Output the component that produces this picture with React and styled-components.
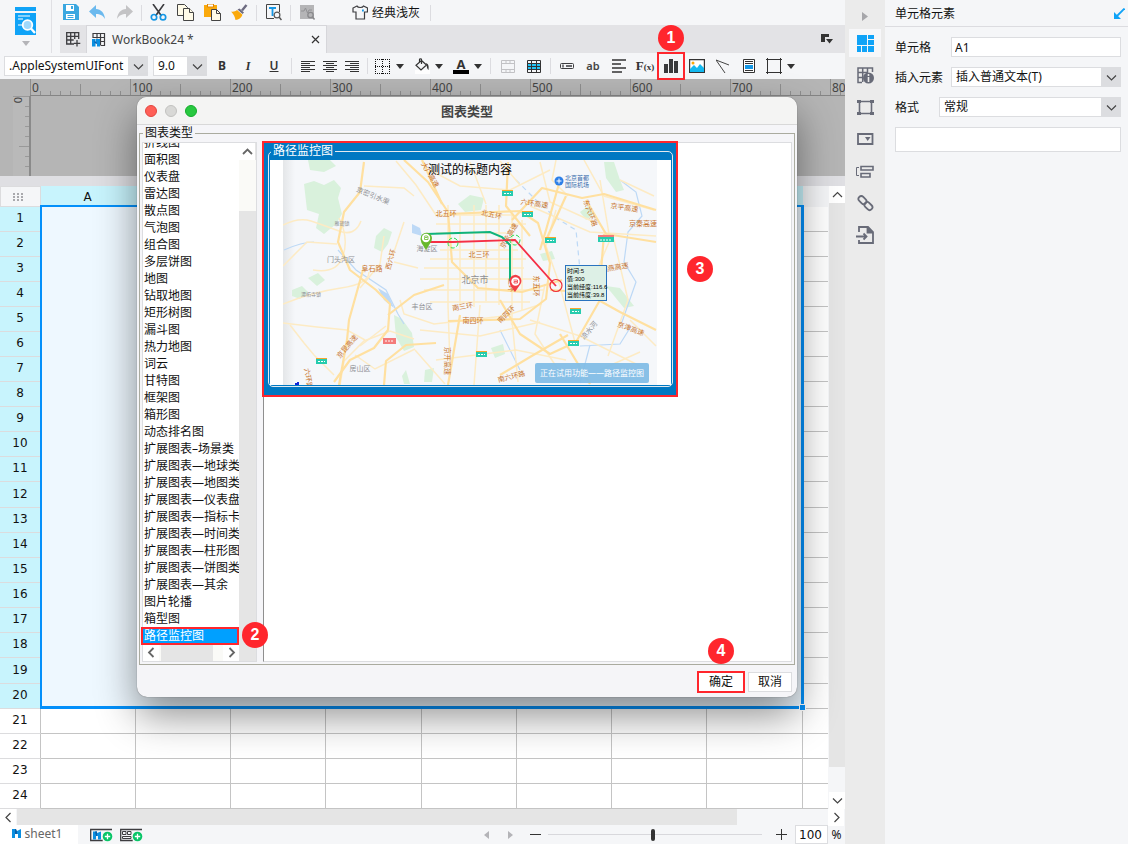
import React, { useState } from "react";
import styled, { createGlobalStyle, css } from "styled-components";

const chartTypes = [
  "折线图",
  "面积图",
  "仪表盘",
  "雷达图",
  "散点图",
  "气泡图",
  "组合图",
  "多层饼图",
  "地图",
  "钻取地图",
  "矩形树图",
  "漏斗图",
  "热力地图",
  "词云",
  "甘特图",
  "框架图",
  "箱形图",
  "动态排名图",
  "扩展图表–场景类",
  "扩展图表—地球类",
  "扩展图表—地图类",
  "扩展图表—仪表盘",
  "扩展图表—指标卡",
  "扩展图表—时间类",
  "扩展图表—柱形图",
  "扩展图表—饼图类",
  "扩展图表—其余",
  "图片轮播",
  "箱型图",
  "路径监控图",
];

const columns = [
  { name: "A", width: 95 },
  { name: "B", width: 95 },
  { name: "C", width: 95 },
  { name: "D", width: 96 },
  { name: "E", width: 95 },
  { name: "F", width: 95 },
  { name: "G", width: 95 },
  { name: "H", width: 96 },
];
const rows = Array.from({ length: 24 }, (_, i) => i + 1);
const tallRows = [12, 19];

export default function App() {
  const [selected, setSelected] = useState("路径监控图");
  const [zoom, setZoom] = useState(49);

  return (
    <Page>
      <GlobalStyle />
      <Designer>
        <Header>
          <Logo aria-label="预览">
            <LogoIcon />
            <Caret />
          </Logo>
          <HeaderRows>
            <QuickBar />
            <Tabs>
              <NewTab aria-label="新建">
                <svg width="16" height="16" viewBox="0 0 16 16" fill="none" stroke="#3d3d40" strokeWidth="1.3">
                  <path d="M9 13H1.7V1.7h12V8M1.7 5.3h12M1.7 9h7M5.7 1.7V13M9.7 1.7V8M12 9v6.5M8.8 12.3h6.5" />
                </svg>
              </NewTab>
              <WorkTab>
                <svg width="15" height="15" viewBox="0 0 15 15" fill="none">
                  <path d="M2 6V1.500h11.500v12H10M2 5.500h11.500M9.500 9.500h4M6 1.500v5M9.500 1.500v12" stroke="#3d3d40" strokeWidth="1.200" />
                  <path d="M1 7h3.500v7.500H1zM5 7h4v7.500H6V11H5z" fill="#0b8fe0" />
                  <path d="M3.500 8.500L6 11v1l-2.500-1z" fill="#0b5fae" />
                </svg>
                <TabName>WorkBook24 *</TabName>
                <TabClose aria-label="关闭">
                  <svg width="9" height="9" viewBox="0 0 9 9" stroke="#333" strokeWidth="1.2">
                    <path d="M1 1l7 7M8 1L1 8" />
                  </svg>
                </TabClose>
              </WorkTab>
              <TabList aria-label="标签列表">
                <svg width="13" height="11" viewBox="0 0 13 11" fill="#333">
                  <path d="M0 0h8v3H4v5H0zM5 5h7L8.500 9.500z" />
                </svg>
              </TabList>
            </Tabs>
          </HeaderRows>
        </Header>
        <FormatBar />
        <Canvas>
          <TopRuler />
          <CanvasBody>
            <SideRuler />
          </CanvasBody>
        </Canvas>
        <SheetGrid />
        <HScroll>
          <ScrollButton aria-label="左"><Arrow dir="left" /></ScrollButton>
          <HThumb />
          <ScrollButton aria-label="右"><Arrow dir="right" /></ScrollButton>
        </HScroll>
        <StatusBar>
          <SheetTab>
            <SheetMark />
            sheet1
          </SheetTab>
          <AddSheets>
            <BareButton aria-label="新增普通报表">
              <svg width="23" height="14" viewBox="0 0 23 14" fill="none">
                <path d="M22 1.500H.7v11h12" stroke="#3d3d40" strokeWidth="1.300" />
                <path d="M3 3.500h4v4H6v4H3zM7 5l4-1.500v8H8V8H7z" fill="#0b8fe0" />
                <path d="M5 3.500h2v4.500H6z" fill="#0a5ea8" />
                <circle cx="17.500" cy="8.500" r="4.800" fill="#08c567" />
                <path d="M17.500 5.800v5.400M14.800 8.500h5.400" stroke="#fff" strokeWidth="1.300" />
              </svg>
            </BareButton>
            <BareButton aria-label="新增聚合报表">
              <svg width="23" height="14" viewBox="0 0 23 14" fill="none">
                <path d="M22 1.500H.7v11h12" stroke="#3d3d40" strokeWidth="1.300" />
                <path d="M2.500 3.500h3.500v3H2.500zM7.500 3.500h3.500v3H7.500zM2.500 8.500h8.500v2H2.500z" stroke="#3d3d40" />
                <circle cx="17.500" cy="8.500" r="4.800" fill="#08c567" />
                <path d="M17.500 5.800v5.400M14.800 8.500h5.400" stroke="#fff" strokeWidth="1.300" />
              </svg>
            </BareButton>
          </AddSheets>
          <Pager>
            <BareButton aria-label="上一个">
              <svg width="5" height="8" viewBox="0 0 5 8"><path d="M5 0v8L0 4z" fill="#b4b4b8" /></svg>
            </BareButton>
            <BareButton aria-label="下一个">
              <svg width="5" height="8" viewBox="0 0 5 8"><path d="M0 0v8l5-4z" fill="#b4b4b8" /></svg>
            </BareButton>
          </Pager>
          <BareButton aria-label="缩小">
            <svg width="11" height="11" viewBox="0 0 11 11" stroke="#333"><path d="M0 5.500h11" /></svg>
          </BareButton>
          <Slider
            type="range"
            aria-label="缩放"
            value={zoom}
            onChange={(e) => setZoom(Number(e.target.value))}
          />
          <BareButton aria-label="放大">
            <svg width="11" height="11" viewBox="0 0 11 11" stroke="#333"><path d="M0 5.500h11M5.500 0v11" /></svg>
          </BareButton>
          <ZoomLabel>
            <ZoomInput type="text" defaultValue="100" />
            <Percent>%</Percent>
          </ZoomLabel>
        </StatusBar>
      </Designer>
      <SideTools />
      <CellPanel />
      <Dialog role="dialog" aria-label="图表类型">
        <DialogTitle>
          <Lights>
            <Light $color="#ff5f57" $edge="#e2463f" aria-label="关闭" />
            <Light $color="#d8d8d6" $edge="#c2c2c0" aria-label="最小化" />
            <Light $color="#28c840" $edge="#14ac2c" aria-label="最大化" />
          </Lights>
          图表类型
        </DialogTitle>
        <TypeFields>
          <legend>图表类型</legend>
          <ListPanel>
            <TypeList role="listbox" aria-label="图表类型">
              {chartTypes.map((type) => (
                <TypeItem
                  key={type}
                  role="option"
                  aria-selected={type === selected}
                  $active={type === selected}
                  onClick={() => setSelected(type)}
                >
                  {type}
                </TypeItem>
              ))}
            </TypeList>
            <ListVScroll>
              <ScrollButton aria-label="上"><Arrow dir="up" bold /></ScrollButton>
              <ListTrack />
              <ListThumb />
            </ListVScroll>
            <ListHScroll>
              <ScrollButton aria-label="左"><Arrow dir="left" bold /></ScrollButton>
              <ListHThumb />
              <ScrollButton aria-label="右"><Arrow dir="right" bold /></ScrollButton>
            </ListHScroll>
            <ListMark />
            <Badge $x={99} $y={479}>2</Badge>
          </ListPanel>
          <ChartPane>
            <ChartCard>
              <CardFields>
                <legend>路径监控图</legend>
                <RouteMap />
              </CardFields>
            </ChartCard>
            <Badge $x={423} $y={113}>3</Badge>
          </ChartPane>
        </TypeFields>
        <DialogFooter>
          <OkButton>确定</OkButton>
          <DialogButton>取消</DialogButton>
          <Badge $x={571} $y={-27}>4</Badge>
        </DialogFooter>
      </Dialog>
    </Page>
  );
}

function Caret() {
  return (
    <svg width="8" height="5" viewBox="0 0 8 5">
      <path d="M0 0h8L4 5z" fill="currentColor" />
    </svg>
  );
}

function Arrow({ dir, bold }) {
  const paths = {
    up: "M1 8l4.500-4.500L10 8",
    down: "M1 3.500l4.500 4.500L10 3.500",
    left: "M7.500 1L3 5.500 7.500 10",
    right: "M3.500 1L8 5.500 3.500 10",
  };
  return (
    <svg width="11" height="11" viewBox="0 0 11 11" fill="none" stroke={bold ? "#666" : "#444"} strokeWidth={bold ? 1.8 : 1.2}>
      <path d={paths[dir]} />
    </svg>
  );
}

function SheetMark() {
  return (
    <svg width="9" height="9" viewBox="0 0 9 9">
      <path d="M0 0h4v5H3v4H0zM5 2l4-2v9H6V5H5z" fill="#0b8fe0" />
      <path d="M3 0h1l1 2v3H3z" fill="#0a5ea8" />
    </svg>
  );
}

function LogoIcon() {
  return (
    <svg width="22" height="28" viewBox="0 0 22 28">
      <path d="M0 0h21v4H0zM0 6h21v22H0z" fill="#10a3f7" />
      <path d="M3 9h12M3 12h5M3 18h4" stroke="#fff" strokeWidth="1.200" />
      <circle cx="12.500" cy="18" r="4.800" fill="#9fd8fb" stroke="#fff" strokeWidth="1.800" />
      <path d="M16 21.500l4 4.500" stroke="#fff" strokeWidth="2.400" />
    </svg>
  );
}

function QuickBar() {
  return (
    <Quick>
      <QuickButton aria-label="保存">
        <svg width="17" height="17" viewBox="0 0 17 17">
          <path d="M1 0h13l3 3v13H1z" fill="#3aa7e0" />
          <path d="M4 1h8v6H4zM4 10h9v5H4z" fill="#fff" />
          <path d="M9 2h2v3H9z" fill="#3aa7e0" />
          <path d="M5.500 11.500h6M5.500 13.500h6" stroke="#3aa7e0" />
        </svg>
      </QuickButton>
      <QuickButton aria-label="撤销">
        <svg width="17" height="15" viewBox="0 0 17 15">
          <path d="M7 0v4c5 .2 8.500 4 9 10-2-3.600-4.700-5-9-5v4L0 6.500z" fill="#6bb9ee" />
        </svg>
      </QuickButton>
      <QuickButton aria-label="重做">
        <svg width="17" height="15" viewBox="0 0 17 15">
          <path d="M10 0v4C5 4.200 1.500 8 1 14c2-3.600 4.700-5 9-5v4l7-6.500z" fill="#c3c3c5" />
        </svg>
      </QuickButton>
      <QuickSep />
      <QuickButton aria-label="剪切">
        <svg width="17" height="17" viewBox="0 0 17 17" fill="none">
          <path d="M3 0l8.500 12M14 0L5.500 12" stroke="#3b3b3f" strokeWidth="1.600" />
          <circle cx="4" cy="13.200" r="2.700" stroke="#1597e5" strokeWidth="1.700" />
          <circle cx="13" cy="13.200" r="2.700" stroke="#1597e5" strokeWidth="1.700" />
        </svg>
      </QuickButton>
      <QuickButton aria-label="复制">
        <svg width="17" height="17" viewBox="0 0 17 17" stroke="#444" fill="#fffbe8">
          <path d="M.5.500h7l3 3v8H.5z" />
          <path d="M6.500 4.500h6l4 4v8h-10z" />
          <path d="M12.500 4.500v4h4" />
        </svg>
      </QuickButton>
      <QuickButton aria-label="粘贴">
        <svg width="17" height="17" viewBox="0 0 17 17">
          <path d="M0 1h13v12H0z" fill="#faa90b" />
          <path d="M3.500 0h6v3h-6z" fill="#fff" stroke="#e08500" />
          <path d="M7.500 5.500h5l4 4v7h-9z" fill="#fffbe8" stroke="#444" />
          <path d="M12.500 5.500v4h4" stroke="#444" fill="none" />
        </svg>
      </QuickButton>
      <QuickButton aria-label="格式刷">
        <svg width="17" height="17" viewBox="0 0 17 17">
          <path d="M15.500 1L11 6.500" stroke="#6d6b80" strokeWidth="2.400" />
          <path d="M8.500 4.500l4.500 4-1.500 1.500-5-4.500z" fill="#6d6b80" />
          <path d="M6 6l5.500 4.800C10 14 8 16 4.500 16 4 13 2.500 10 0 7.500 2 8 4.500 7.500 6 6z" fill="#faa90b" />
        </svg>
      </QuickButton>
      <QuickSep />
      <QuickButton aria-label="查找">
        <svg width="17" height="17" viewBox="0 0 17 17" fill="none">
          <path d="M9 14.500H1.500V.500h13V8" stroke="#444" />
          <path d="M4 4h7M7.500 4v8" stroke="#1597e5" strokeWidth="1.800" />
          <circle cx="12" cy="11" r="2.900" stroke="#555" strokeWidth="1.200" />
          <path d="M14 13l2.500 3" stroke="#555" strokeWidth="1.500" />
        </svg>
      </QuickButton>
      <QuickSep />
      <QuickButton aria-label="诊断">
        <svg width="17" height="17" viewBox="0 0 17 17" fill="none">
          <path d="M1 1h14v14H1z" fill="#b5b5b7" />
          <path d="M2 7h3l1.500-3 2 5 1.500-3h3" stroke="#929295" />
          <circle cx="11.500" cy="11" r="2.700" stroke="#89898c" strokeWidth="1.300" />
          <path d="M13.500 13l2 2.500" stroke="#89898c" strokeWidth="1.500" />
        </svg>
      </QuickButton>
      <ThemeButton>
        <svg width="16" height="15" viewBox="0 0 16 15" fill="none" stroke="#3d3d40" strokeWidth="1.200">
          <path d="M5 1L1 3v4h3v7h8.500V7h3V3l-4-2c-.8 2-5.700 2-6.500 0z" />
          <path d="M10 5.500h1.800" stroke="#1597e5" strokeWidth="1.800" />
        </svg>
        经典浅灰
      </ThemeButton>
      <QuickSep />
    </Quick>
  );
}

function AlignIcon({ widths, x }) {
  return (
    <svg width="14" height="13" viewBox="0 0 14 13" fill="#333">
      {widths.map((w, i) => (
        <rect key={i} x={x === "left" ? 0 : x === "right" ? 14 - w : (14 - w) / 2} y={i * 2 + 1} width={w} height="1" />
      ))}
    </svg>
  );
}

function FormatBar() {
  return (
    <Format>
      <Combo $width={144}>
        <select aria-label="字体" defaultValue="a">
          <option value="a">.AppleSystemUIFont</option>
        </select>
        <ComboArrow><Arrow dir="down" /></ComboArrow>
      </Combo>
      <Combo $width={54}>
        <select aria-label="字号" defaultValue="9">
          <option value="9">9.0</option>
        </select>
        <ComboArrow><Arrow dir="down" /></ComboArrow>
      </Combo>
      <ToolGroup $pad={2}>
        <ToolButton><Bold>B</Bold></ToolButton>
        <ToolButton><Italic>I</Italic></ToolButton>
        <ToolButton><Underline>U</Underline></ToolButton>
      </ToolGroup>
      <ToolSep />
      <ToolGroup $pad={2}>
        <ToolButton $width={22} aria-label="左对齐"><AlignIcon x="left" widths={[14, 9, 14, 9, 14, 9]} /></ToolButton>
        <ToolButton $width={22} aria-label="居中"><AlignIcon x="center" widths={[14, 8, 14, 8, 14, 8]} /></ToolButton>
        <ToolButton $width={22} aria-label="右对齐"><AlignIcon x="right" widths={[14, 9, 14, 9, 14, 9]} /></ToolButton>
      </ToolGroup>
      <ToolSep />
      <ToolGroup>
        <DropButton aria-label="边框">
          <svg width="16" height="15" viewBox="0 0 16 15" fill="none" stroke="#111">
            <path d="M0 .5h15M0 14.500h15M.5 0v15M14.500 0v15M7.500 0v15M0 7.500h15" strokeDasharray="1 1" />
          </svg>
          <Caret />
        </DropButton>
        <DropButton aria-label="背景">
          <svg width="16" height="16" viewBox="0 0 16 16" fill="none">
            <path d="M1 12h15v4H1z" fill="#fff" />
            <path d="M7.500 2.500l5 4.500-5.500 5-5-4.700zM7.500 6V1.500c0-1-2-1-2 0V5" stroke="#333" strokeWidth="1.200" />
            <path d="M12 5c2.500 1 3 3 2.500 7-1.500-1-1.500-3-2-5z" fill="#333" />
          </svg>
          <Caret />
        </DropButton>
        <DropButton aria-label="字体颜色">
          <FontColor>A</FontColor>
          <Caret />
        </DropButton>
      </ToolGroup>
      <ToolSep />
      <ToolGroup $pad={1}>
        <ToolButton aria-label="合并">
          <svg width="14" height="13" viewBox="0 0 14 13" fill="none" stroke="#c2c2c5">
            <path d="M.5.500h13v12H.5zM.5 3.500h13M.5 9.500h13M5 .5v3M9 .5v3M5 9.500v3M9 9.500v3" />
          </svg>
        </ToolButton>
        <ToolButton aria-label="单元格">
          <svg width="14" height="13" viewBox="0 0 14 13" fill="none">
            <path d="M.5 3h13v6.500H.5z" fill="#23c4f5" />
            <path d="M.5.500h13v12H.5zM.5 3.500h13M.5 6.500h13M.5 9.500h13M4.500.500v12M9.500.500v12" stroke="#333" />
          </svg>
        </ToolButton>
      </ToolGroup>
      <ToolSep />
      <ToolGroup>
        <ToolButton aria-label="控件">
          <svg width="15" height="6" viewBox="0 0 15 6" fill="none" stroke="#3d3d40">
            <rect x=".5" y=".5" width="13" height="5" rx="1" />
            <path d="M3 1.500v3M6 3h6" strokeWidth="1.300" />
          </svg>
        </ToolButton>
        <ToolButton><Ab>ab</Ab></ToolButton>
        <ToolButton aria-label="富文本">
          <svg width="14" height="14" viewBox="0 0 14 14" stroke="#333" strokeWidth="1.600">
            <path d="M0 1h14M0 5h9M0 9h14M0 13h10" />
          </svg>
        </ToolButton>
        <ToolButton><Formula>F<small>(x)</small></Formula></ToolButton>
        <ToolButton aria-label="图表" $marked>
          <svg width="14" height="14" viewBox="0 0 14 14" fill="#3a3a3c">
            <path d="M0 5h4v9H0zM5 0h4v14H5zM10 2h4v12h-4z" />
          </svg>
          <Badge $x={0} $y={-28}>1</Badge>
        </ToolButton>
        <ToolButton aria-label="图片">
          <svg width="16" height="14" viewBox="0 0 16 14">
            <path d="M.6.600h14.800v12.800H.6z" fill="#fff" stroke="#333" strokeWidth="1.200" />
            <path d="M1 13V10l4-4 3 3 3-4 4 4v4z" fill="#14b9f0" />
            <circle cx="4" cy="4" r="1.500" fill="#faa90b" />
          </svg>
        </ToolButton>
        <ToolButton aria-label="斜线">
          <svg width="14" height="14" viewBox="0 0 14 14" stroke="#444">
            <path d="M0 1l13 5M0 1l9 13" />
          </svg>
        </ToolButton>
        <ToolButton aria-label="子报表">
          <svg width="12" height="14" viewBox="0 0 12 14">
            <path d="M.5.500h11v13H.5z" fill="#fff" stroke="#333" />
            <path d="M2 2.500h8M2 4.500h8M2 11.500h8" stroke="#333" />
            <path d="M2 6h8v4H2z" fill="#1597e5" />
          </svg>
        </ToolButton>
        <DropButton aria-label="悬浮元素">
          <svg width="16" height="16" viewBox="0 0 16 16" fill="none" stroke="#333">
            <path d="M0 1.500h16M0 14.500h16M1.500 0v16M14.500 0v16" />
          </svg>
          <Caret />
        </DropButton>
      </ToolGroup>
    </Format>
  );
}

function TopRuler() {
  const ticks = Array.from({ length: 82 }, (_, i) => i);
  return (
    <RulerSvg width="100%" height="17">
      {ticks.map((i) => (
        <rect key={i} x={30 + i * 10} y={i % 10 === 0 ? 0 : i % 5 === 0 ? 5 : 12} width="1" height="17" fill="#8e8e8e" />
      ))}
      <rect x="30" y="16" width="100%" height="1" fill="#858585" />
      {ticks.filter((i) => i % 10 === 0).map((i) => (
        <text key={i} x={32 + i * 10} y="13">{i * 10}</text>
      ))}
    </RulerSvg>
  );
}

function SideRuler() {
  return (
    <SideRulerSvg width="31" height="80">
      <rect x="13" width="17" height="80" fill="#b9b9b9" />
      <path d="M13 .500h17M25 10.500h5M25 20.500h5M25 30.500h5M25 40.500h5M19 50.500h11M25 60.500h5M25 70.500h5" stroke="#999" />
      <path d="M30 0v80" stroke="#8a8a8a" strokeWidth="2" />
      <text transform="translate(22 4) rotate(-90)">0</text>
    </SideRulerSvg>
  );
}

function SheetGrid() {
  return (
    <GridArea>
      <TableWrap>
        <Table>
          <colgroup>
            <col style={{ width: 41 }} />
            {columns.map((c) => (
              <col key={c.name} style={{ width: c.width }} />
            ))}
            <col />
          </colgroup>
          <thead>
            <tr>
              <CornerCell>
                <svg width="10" height="8" viewBox="0 0 10 8" fill="#a9a9ad">
                  <path d="M0 0h2v2H0zM4 0h2v2H4zM8 0h2v2H8zM0 3h2v2H0zM4 3h2v2H4zM8 3h2v2H8zM0 6h2v2H0zM4 6h2v2H4zM8 6h2v2H8z" />
                </svg>
              </CornerCell>
              {columns.map((c) => (
                <ColHead key={c.name} scope="col" $on>{c.name}</ColHead>
              ))}
              <ColHead />
            </tr>
          </thead>
          <tbody>
            {rows.map((n) => (
              <GridRow key={n} $tall={tallRows.includes(n)}>
                <RowHead scope="row" $on={n <= 20}>{n}</RowHead>
                {columns.map((c) => (
                  <Cell key={c.name} $on={n <= 20} />
                ))}
                <Cell />
              </GridRow>
            ))}
          </tbody>
        </Table>
        <Selection />
      </TableWrap>
      <VScroll>
        <ScrollButton aria-label="上"><Arrow dir="up" /></ScrollButton>
        <VThumb />
        <ScrollButton aria-label="下"><Arrow dir="down" /></ScrollButton>
      </VScroll>
    </GridArea>
  );
}

function SideTools() {
  return (
    <Tools>
      <FoldButton aria-label="收起">
        <svg width="6" height="9" viewBox="0 0 6 9"><path d="M0 0v9l6-4.500z" fill="#a6a6aa" /></svg>
      </FoldButton>
      <SideButton $active aria-label="单元格元素">
        <svg width="17" height="17" viewBox="0 0 17 17" fill="#10a3f7">
          <path d="M0 0h10v10H0zM11 0h6v4h-6zM11 5h6v5h-6zM0 11h4v6H0zM5 11h5v6H5zM11 11h6v6h-6z" />
        </svg>
      </SideButton>
      <SideButton aria-label="单元格属性">
        <svg width="17" height="17" viewBox="0 0 17 17" fill="none">
          <path d="M5 15.500H1V1h14.500v4M1 5.500h10M1 10.500h4M5.700 1v14M10.500 1v4" stroke="#686b78" strokeWidth="1.500" />
          <circle cx="11.500" cy="11" r="5.500" fill="#686b78" />
          <path d="M11.500 7v2M11.500 10v5" stroke="#ebebeb" strokeWidth="1.600" />
        </svg>
      </SideButton>
      <SideButton aria-label="悬浮元素">
        <svg width="17" height="17" viewBox="0 0 17 17" fill="none" stroke="#686b78">
          <path d="M2.500 2.500h12v12h-12z" strokeWidth="1.600" />
          <path d="M0 1h4v3H0zM13 1h4v3h-4zM0 13h4v3H0zM13 13h4v3h-4z" fill="#686b78" stroke="none" />
        </svg>
      </SideButton>
      <SideButton aria-label="控件设置">
        <svg width="17" height="12" viewBox="0 0 17 12" fill="none">
          <path d="M1 1h14.500v10H1z" stroke="#686b78" strokeWidth="1.800" />
          <path d="M8 4h5.500L10.700 8z" fill="#686b78" />
        </svg>
      </SideButton>
      <SideButton aria-label="条件属性">
        <svg width="18" height="13" viewBox="0 0 18 13" fill="none" stroke="#686b78">
          <path d="M3 2.500H.5v8H3" />
          <path d="M5 1.500h12v3.500H5zM5 8.500h9V12H5z" strokeWidth="1.600" />
        </svg>
      </SideButton>
      <SideButton aria-label="超级链接">
        <svg width="17" height="17" viewBox="0 0 17 17" fill="none" stroke="#686b78" strokeWidth="1.800">
          <rect x="-1.300" y="-1.300" width="9" height="5.600" rx="2.800" transform="translate(4.300 1.800) rotate(45)" />
          <rect x="-1.300" y="-1.300" width="9" height="5.600" rx="2.800" transform="translate(10.200 7.700) rotate(45)" />
        </svg>
      </SideButton>
      <SideButton aria-label="导出">
        <svg width="18" height="18" viewBox="0 0 18 18" fill="none" stroke="#686b78" strokeWidth="1.800">
          <path d="M3 6V1h9l5 5v11H3v-3" />
          <path d="M0 10.500h10M7.500 7.500l3 3-3 3" />
          <path d="M11.500 1v5.500H17" fill="#686b78" />
        </svg>
      </SideButton>
    </Tools>
  );
}

function CellPanel() {
  return (
    <Panel>
      <PanelHead>
        单元格元素
        <BareButton aria-label="展开">
          <svg width="12" height="12" viewBox="0 0 12 12" fill="none" stroke="#10a3f7" strokeWidth="1.800">
            <path d="M11.500.500L4 8" />
            <path d="M1 4v7h7z" fill="#10a3f7" stroke="none" />
          </svg>
        </BareButton>
      </PanelHead>
      <PanelBody>
        <Field $label={56}>
          <label htmlFor="cell">单元格</label>
          <TextInput id="cell" type="text" defaultValue="A1" />
        </Field>
        <Field $label={56}>
          <label htmlFor="element">插入元素</label>
          <Combo $fill>
            <select id="element" defaultValue="t">
              <option value="t">插入普通文本(T)</option>
            </select>
            <ComboArrow><Arrow dir="down" /></ComboArrow>
          </Combo>
        </Field>
        <Field $label={44}>
          <label htmlFor="format">格式</label>
          <Combo $fill>
            <select id="format" defaultValue="n">
              <option value="n">常规</option>
            </select>
            <ComboArrow><Arrow dir="down" /></ComboArrow>
          </Combo>
        </Field>
        <TextInput type="text" aria-label="格式内容" $tall />
      </PanelBody>
    </Panel>
  );
}

const greens = [
  "M304 184l10-3 10 4 10-5 7 8-3 10 4 16-6 10-12 10-8-6 3-14-12-4z",
  "M308 160h22l6 6-12 6-14-2z",
  "M376 236l8-8 8 4-4 12-6 8-8-4z",
  "M458 204l12-9 14 3-3 12-16 2z",
  "M292 290l10-4 6 6-8 7-8-3z",
  "M308 278l10-5 7 7-8 6z",
  "M394 315l8 4 10 14 2 14-10 4-8-14z",
  "M604 162l10 0 6 18 4 10-8 2-10-14z",
  "M606 286l14 2 14 18-10 2z",
  "M540 254l12-3 3 8-12 2z",
  "M580 212l8-6 6 8-8 6z",
  "M491 348l12-4 2 10-10 4z",
  "M402 376l4-6 4 14h-6zM425 370l9-2-2 14h-8z",
];

const minorRoads = [
  "M283 225q16-8 28-4t28 10 22-10",
  "M283 266l24-24 30 2",
  "M283 304q30-12 58-16t28-16",
  "M283 323l34 4 30 3 18 10",
  "M290 325l14 18 10 12 20 20",
  "M340 385l4-24 20-20 26-10 24 8",
  "M360 346l26-20M355 355l20 14 40-20",
  "M339 218q10 20 4 38t-30 14",
  "M396 161l20 24 20 30M364 186l40 2 10 8",
  "M430 170l30 16 50 4 40-20",
  "M436 215h78M436 224h90M436 233h70M440 250h78M430 259h96M424 268h100M420 279h118M424 290h120M430 302h100",
  "M448 205v100M460 215v92M474 205v102M486 205v96M499 205v100M512 215v110M522 220v90",
  "M400 300l4 14 30 10 70-8 38-12",
  "M448 305l2 60M480 305l-6 80M512 320l6 62M436 360l80-10 50 10",
  "M500 161l20 24M470 162l16 42M540 162l10 40 44 20",
  "M556 160l-4 20 16 16M584 160l20 36 50 14",
  "M530 206l60 26 66 4M556 210l-10 36 14 40 16 60",
  "M600 180l10 60-20 46M614 240l14 60-20 56",
  "M545 284l-10 50 26 40M530 320l50 16 60 30",
  "M620 180l34 16M630 320l26 26M600 370l40-18",
  "M384 236l-4 28-20 24M394 262l24 6M404 222l-12 36",
  "M420 330l60 6 60-14M415 350l30 34",
];

const majorRoads = [
  "M364 162l-4 30-16 20-6 30 12 28 26 20 14 14-2 26-14 18-24 12-16 22",
  "M363 270l-14 50-2 20-8 45",
  "M404 160l24 22 20 30 4 50 26 26 44 4 40-12",
  "M422 160l20 44",
  "M388 315l26-20 30-10",
  "M448 214l72-3 18 12 12 40-4 36-26 20-72 2",
  "M500 300l20 34 30 20 26-12 24-42",
  "M508 162l-2 44 24 30",
  "M550 290l34 2 36 20 36 18",
  "M512 220l30-32 40 10 22-4 52 16",
  "M560 180l-14 50-6 20M566 196l-20 44",
  "M586 200l20 34 50 8M604 234l-4 50",
  "M384 385l2-24 20-16 30-2",
  "M448 385l12-70",
  "M500 375l30-18 38-22M560 334l30 50",
];

const roadNames = [
  [428, 176, "大广高速", 60],
  [446, 216, "北五环", 0],
  [491, 217, "北五环", 12],
  [534, 206, "六环高速", 8],
  [624, 210, "京平高速", 8],
  [643, 226, "京秦高速", 0],
  [588, 214, "东六环路", 70],
  [479, 257, "北三环", 0],
  [511, 237, "京承高速", -60],
  [393, 260, "西六环", -75],
  [372, 271, "阜石路", 0],
  [615, 270, "通燕高速", -10],
  [463, 309, "南三环", -10],
  [473, 323, "南四环", 0],
  [509, 285, "三环", 90],
  [534, 286, "东五环", 90],
  [508, 316, "南四环", -45],
  [349, 348, "京昆高速", -50],
  [306, 379, "六环路", 80],
  [445, 361, "京开高速", 90],
  [630, 331, "京津高速", 20],
  [512, 379, "南六环路", -15],
];

const shields = [
  [502, 191], [522, 212], [545, 238], [316, 359], [570, 309], [568, 341], [476, 352],
];

function RouteMap() {
  return (
    <MapSvg viewBox="270 160 401 225" role="img" aria-label="路径监控图">
      <defs>
        <clipPath id="mapArea">
          <rect x="283" y="160" width="374" height="225" />
        </clipPath>
        <linearGradient id="mapEdge">
          <stop offset="0" stopColor="#e4e6e8" />
          <stop offset="1" stopColor="#f5f7fa" />
        </linearGradient>
      </defs>
      <g clipPath="url(#mapArea)">
        <rect x="283" y="160" width="374" height="225" fill="#f5f7fa" />
        <rect x="283" y="160" width="12" height="225" fill="url(#mapEdge)" />
        {greens.map((d) => <path key={d} d={d} fill="#d9f1dc" />)}
        <g fill="none" stroke="#bdd9f6" strokeWidth="1.200">
          <path d="M620 180l16 12 6 24-14 16-4 30 12 20-14 40" />
          <path d="M284 250q18-8 30-8M338 250l18 20 30 20 12 24 6 10" />
          <path d="M516 180l20 20 20 18 20 12 4 40" strokeDasharray="5 4" />
          <path d="M580 346l40-2 10-16M500 330l20 40M590 345l-10 38" />
        </g>
        <path d="M412 224l8 4 2 8-10-3zM378 288l10 6 6 14-10-8z" fill="#bdd9f6" />
        <g fill="none" stroke="#fdebc4" strokeWidth="1.500">
          {minorRoads.map((d) => <path key={d} d={d} />)}
        </g>
        <g fill="none" stroke="#ffe0a0" strokeWidth="2.200" strokeLinejoin="round">
          {majorRoads.map((d) => <path key={d} d={d} />)}
        </g>
        {shields.map(([x, y]) => (
          <g key={x}>
            <rect x={x} y={y - 1} width="11" height="6" fill="#26ccae" />
            <rect x={x} y={y - 1} width="11" height="1" fill="#f7a72d" />
            <path d={`M${x + 2} ${y + 2.500}h7`} stroke="#fff" strokeDasharray="2 1" />
          </g>
        ))}
        <g>
          <rect x="598" y="236" width="16" height="6" fill="#26ccae" />
          <rect x="598" y="235" width="16" height="2" fill="#f47b7b" />
          <rect x="383" y="338" width="13" height="6" fill="#f47b7b" />
          <path d="M600 240h12M385 341h9" stroke="#fff" strokeDasharray="2 1" />
        </g>
        <g fontSize="7" fill="#c8752e" textAnchor="middle">
          {roadNames.map(([x, y, name, turn], i) => (
            <text key={i} transform={`translate(${x} ${y}) rotate(${turn})`}>{name}</text>
          ))}
        </g>
        <g fill="#8d8f94" textAnchor="middle">
          <text fontSize="9" x="475" y="283">北京市</text>
          <text fontSize="7" x="341" y="262">门头沟区</text>
          <text fontSize="7" x="427" y="251">海淀区</text>
          <text fontSize="7" x="422" y="309">丰台区</text>
          <text fontSize="7" x="360" y="371">房山区</text>
          <text fontSize="5" x="342" y="225">雁翅镇</text>
          <text fontSize="5" x="311" y="296">潭柘寺镇</text>
          <text fontSize="7" transform="translate(372 198) rotate(22)">京密引水渠</text>
          <text fontSize="7" transform="translate(591 332) rotate(-50)">凉水河</text>
        </g>
        <circle cx="559" cy="181" r="4.500" fill="#2c7fe8" />
        <path d="M556.500 181h5M559 178.500v5" stroke="#fff" />
        <g fontSize="6" fill="#3c6fae">
          <text x="565" y="180">北京首都</text>
          <text x="565" y="187">国际机场</text>
        </g>
      </g>
      <g fill="none">
        <path d="M426 234l64-2 12 5 8 8v36" stroke="#0fb37c" strokeWidth="2" />
        <path d="M426 242l27 0 62-2 41 46" stroke="#f52f45" strokeWidth="1.800" />
        <circle cx="453" cy="243" r="5" stroke="#28e050" strokeDasharray="4 2" />
        <circle cx="515" cy="240" r="5" stroke="#28e050" strokeDasharray="4 2" />
        <circle cx="556" cy="285.500" r="6" stroke="#ef3038" strokeWidth="1.200" />
        <path d="M420.500 239a5.800 5.800 0 1 1 11 2l-5.500 9-4.500-7z" fill="#67b82c" />
        <circle cx="426" cy="238" r="4.200" fill="#fff" />
        <path d="M424 236.500q2-1.500 4 0v3h-3.500v-2h3" stroke="#67b82c" strokeWidth=".8" />
        <path d="M509.500 282a6 6 0 1 1 11 2l-5.500 8-4.500-6z" fill="#f03e46" />
        <circle cx="515.500" cy="281.500" r="4.200" fill="#fff" />
        <path d="M513.500 280h4v3h-3.500v-1.500h3" stroke="#f03e46" strokeWidth=".8" />
      </g>
      <rect x="565.500" y="265.500" width="41" height="35" fill="#ddf0e6" stroke="#2a73bf" />
      <MapTip>
        <text x="567" y="273">时间:5</text>
        <text x="567" y="281">值:300</text>
        <text x="567" y="289">当前经度:116.6</text>
        <text x="567" y="297">当前纬度:39.8</text>
      </MapTip>
      <path d="M295 385v-2h3v2zM297 382h2v3h-2z" fill="#1226d8" />
      <rect x="535" y="363" width="114" height="20" rx="2" fill="#81bce6" fillOpacity=".94" />
      <text x="592" y="376" fontSize="8" fill="#fff" textAnchor="middle">正在试用功能——路径监控图</text>
      <text x="470" y="174" fontSize="12" fill="#000" textAnchor="middle">测试的标题内容</text>
    </MapSvg>
  );
}

const GlobalStyle = createGlobalStyle`
  * {
    box-sizing: border-box;
  }
  body {
    margin: 0;
    background: #f5f6f8;
    color: #111;
    font-family: "Noto Sans", "Noto Sans CJK SC", sans-serif;
    font-size: 12px;
    line-height: 16px;
  }
  button, input, select {
    font: inherit;
    color: inherit;
  }
  svg {
    display: block;
    flex: none;
  }
`;

const Page = styled.div`
  position: relative;
  display: flex;
  min-height: 100vh;
`;

const Designer = styled.main`
  flex: 1;
  min-width: 0;
  display: flex;
  flex-direction: column;
  overflow: hidden;
`;

const BareButton = styled.button`
  display: flex;
  align-items: center;
  justify-content: center;
  padding: 0;
  border: none;
  background: none;
  cursor: pointer;
`;

const Header = styled.header`
  display: flex;
  height: 53px;
`;

const Logo = styled(BareButton)`
  width: 52px;
  margin-right: 8px;
  flex-direction: column;
  gap: 6px;
  color: #b4b4b8;
  border-right: 1px solid #e0e0e4;
`;

const HeaderRows = styled.div`
  flex: 1;
  min-width: 0;
`;

const Quick = styled.div`
  display: flex;
  align-items: center;
  height: 25px;
`;

const QuickButton = styled(BareButton)`
  width: 27px;
  height: 24px;
  &:first-child {
    margin-left: -3px;
  }
`;

const QuickSep = styled.span`
  width: 1px;
  height: 16px;
  margin: 0 3px;
  background: #dcdce0;
`;

const ThemeButton = styled(BareButton)`
  gap: 4px;
  margin: 0 7px 0 31px;
`;

const Tabs = styled.div`
  display: flex;
  height: 28px;
  background: #e3e3e6;
`;

const NewTab = styled(BareButton)`
  width: 26px;
`;

const WorkTab = styled.div`
  display: flex;
  align-items: center;
  width: 241px;
  padding: 0 5px 0 4px;
  background: #f5f6f8;
  border: 1px solid #d6d6da;
  border-bottom: none;
`;

const TabName = styled.span`
  flex: 1;
  padding-left: 6px;
  color: #444;
`;

const TabClose = styled(BareButton)`
  width: 11px;
`;

const TabList = styled(BareButton)`
  margin-left: auto;
  margin-right: 11px;
`;

const Format = styled.div`
  display: flex;
  align-items: center;
  height: 26px;
  padding-left: 4px;
`;

const Combo = styled.div`
  position: relative;
  display: flex;
  width: ${(p) => (p.$fill ? "auto" : p.$width + "px")};
  flex: ${(p) => (p.$fill ? 1 : "none")};
  height: 20px;
  border: 1px solid #dcdde0;
  background: #fff;
  select {
    width: 100%;
    padding: 0 19px 0 4px;
    border: none;
    appearance: none;
    background: none;
  }
  & + & {
    margin-left: 5px;
  }
`;

const ComboArrow = styled.span`
  position: absolute;
  top: -1px;
  right: -1px;
  bottom: -1px;
  width: 20px;
  display: flex;
  align-items: center;
  justify-content: center;
  background: #dcdde0;
  pointer-events: none;
`;

const ToolGroup = styled.div`
  display: flex;
  padding: 0 ${(p) => p.$pad || 0}px;
`;

const ToolButton = styled(BareButton)`
  position: relative;
  width: ${(p) => p.$width || 26}px;
  height: 26px;
  ${(p) =>
    p.$marked &&
    css`
      outline: 2px solid #ff262d;
      outline-offset: -1px;
    `}
`;

const DropButton = styled(BareButton)`
  width: 39px;
  height: 26px;
  padding-left: 4px;
  justify-content: flex-start;
  gap: 5px;
  color: #333;
`;

const ToolSep = styled.span`
  width: 1px;
  height: 16px;
  margin: 0 3px 0 2px;
  background: #dcdce0;
`;

const Bold = styled.b`
  color: #333;
`;

const Italic = styled.i`
  font-family: "Liberation Serif", serif;
  font-weight: bold;
  color: #333;
`;

const Underline = styled.span`
  font-weight: 600;
  text-decoration: underline;
  color: #333;
`;

const FontColor = styled.span`
  width: 16px;
  height: 16px;
  border-bottom: 4px solid #000;
  font-size: 13px;
  font-weight: bold;
  line-height: 12px;
  text-align: center;
`;

const Ab = styled.span`
  font-size: 11px;
  font-weight: 600;
  color: #444;
`;

const Formula = styled.span`
  font-family: "Liberation Serif", serif;
  font-size: 13px;
  font-weight: bold;
  color: #333;
  small {
    font-size: 9px;
  }
`;

const Canvas = styled.div`
  height: 107px;
  background: #b5b5b5;
  border-bottom: 10px solid #dfdfe3;
`;

const RulerSvg = styled.svg`
  text {
    font-size: 12px;
    fill: #444;
  }
`;

const CanvasBody = styled.div`
  height: 80px;
`;

const SideRulerSvg = styled.svg`
  text {
    font-size: 11px;
    text-anchor: middle;
    fill: #444;
  }
`;

const GridArea = styled.div`
  flex: 1;
  display: flex;
`;

const TableWrap = styled.div`
  position: relative;
  flex: 1;
  min-width: 0;
  overflow: hidden;
`;

const Table = styled.table`
  width: 100%;
  table-layout: fixed;
  border-collapse: separate;
  border-spacing: 0;
  background: #fff;
  font-family: "DejaVu Sans", sans-serif;
`;

const CornerCell = styled.th`
  height: 21px;
  padding: 0 5px 0 0;
  background: #f5f6f8;
  border: 1px solid #dcdcde;
  svg {
    margin: 0 auto;
  }
`;

const ColHead = styled.th`
  height: 21px;
  padding: 0 2px 0 0;
  font-weight: normal;
  background: ${(p) => (p.$on ? "#c8f4fd" : "#f5f6f8")};
`;

const GridRow = styled.tr`
  height: ${(p) => (p.$tall ? 26 : 25)}px;
`;

const RowHead = styled.th`
  padding: 0 0 2px;
  font-weight: normal;
  background: ${(p) => (p.$on ? "#c8f4fd" : "#fff")};
  border-bottom: 1px solid #dcdcde;
  border-right: 1px solid #c4c4c4;
`;

const Cell = styled.td`
  padding: 0;
  background: ${(p) => (p.$on ? "#eef8ff" : "#fff")};
  border-bottom: 1px solid ${(p) => (p.$on ? "#eef8ff" : "#c4c4c4")};
  border-right: 1px solid ${(p) => (p.$on ? "#eef8ff" : "#c4c4c4")};
  &:last-child {
    border-right: none;
  }
`;

const Selection = styled.div`
  position: absolute;
  left: 40px;
  top: 19px;
  width: 764px;
  height: 504px;
  border: 2px solid #0390fa;
  border-right-width: 3px;
  border-bottom-width: 3px;
  pointer-events: none;
  &::after {
    content: "";
    position: absolute;
    right: -4px;
    bottom: -4px;
    width: 5px;
    height: 5px;
    background: #0390fa;
    outline: 1px solid #fff;
  }
`;

const ScrollButton = styled(BareButton)`
  flex: none;
  width: 16px;
  height: 17px;
  background: #fff;
`;

const VScroll = styled.div`
  display: flex;
  flex-direction: column;
  width: 17px;
  padding-left: 1px;
`;

const VThumb = styled.div`
  flex: 1;
  margin-bottom: 25px;
  background: #e5e5e5;
`;

const HScroll = styled.div`
  display: flex;
  height: 16px;
  padding-right: 1px;
`;

const HThumb = styled.div`
  flex: 1;
  margin: 0 91px 0 1px;
  background: #e5e5e5;
`;

const StatusBar = styled.footer`
  display: flex;
  align-items: center;
  height: 19px;
`;

const SheetTab = styled(BareButton)`
  align-self: stretch;
  width: 78px;
  padding: 0 4px 2px 0;
  gap: 4px;
  color: #666;
  background: #fff;
`;

const AddSheets = styled.div`
  display: flex;
  gap: 7px;
  padding-left: 12px;
`;

const Pager = styled.div`
  display: flex;
  gap: 19px;
  margin-left: auto;
  margin-right: 17px;
`;

const Slider = styled.input`
  appearance: none;
  width: 214px;
  height: 14px;
  margin: 0 14px 0 7px;
  background: linear-gradient(#d8d8dc, #d8d8dc) center / 100% 1px no-repeat;
  &::-webkit-slider-thumb {
    appearance: none;
    width: 4px;
    height: 12px;
    border-radius: 2px;
    background: #333;
  }
`;

const ZoomLabel = styled.label`
  display: flex;
  align-items: center;
  font-family: "DejaVu Sans", sans-serif;
`;

const ZoomInput = styled.input`
  width: 33px;
  height: 19px;
  margin-left: 8px;
  padding: 0 3px;
  border: 1px solid #dcdde0;
  background: #fff;
`;

const Percent = styled.span`
  width: 17px;
  text-align: center;
  font-family: "Noto Sans", sans-serif;
`;

const Tools = styled.nav`
  width: 40px;
  padding: 0 4px;
  background: #ebebeb;
`;

const FoldButton = styled(BareButton)`
  width: 32px;
  height: 29px;
  padding-top: 4px;
`;

const SideButton = styled(BareButton)`
  width: 32px;
  height: 28px;
  margin-bottom: 4px;
  background: ${(p) => (p.$active ? "#f7f7f9" : "none")};
`;

const Panel = styled.aside`
  width: 243px;
  background: #f5f6f8;
`;

const PanelHead = styled.div`
  display: flex;
  align-items: center;
  justify-content: space-between;
  height: 27px;
  padding: 2px 3px 0 10px;
  border-bottom: 1px solid #dcdce0;
`;

const PanelBody = styled.div`
  display: flex;
  flex-direction: column;
  gap: 10px;
  padding: 10px 7px 0 10px;
`;

const Field = styled.div`
  display: flex;
  align-items: center;
  label {
    width: ${(p) => p.$label}px;
    padding-top: 2px;
  }
`;

const TextInput = styled.input`
  flex: ${(p) => (p.$tall ? "none" : 1)};
  min-width: 0;
  height: ${(p) => (p.$tall ? 25 : 20)}px;
  padding: 0 3px;
  border: 1px solid #dcdde0;
  background: #fff;
`;

const Dialog = styled.section`
  position: absolute;
  left: 137px;
  top: 97px;
  width: 660px;
  background: #f5f5f8;
  border-radius: 10px;
  box-shadow: 0 0 1px rgba(0, 0, 0, 0.6), 0 18px 40px rgba(0, 0, 0, 0.45);
`;

const DialogTitle = styled.div`
  position: relative;
  display: flex;
  align-items: center;
  justify-content: center;
  height: 28px;
  font-size: 13px;
  font-weight: 600;
  color: #444;
  background: #f4f4f3;
  border-bottom: 1px solid #d8d8d8;
  border-radius: 10px 10px 0 0;
`;

const Lights = styled.div`
  position: absolute;
  left: 8px;
  display: flex;
  gap: 8px;
`;

const Light = styled.button`
  width: 12px;
  height: 12px;
  padding: 0;
  border: 1px solid ${(p) => p.$edge};
  border-radius: 50%;
  background: ${(p) => p.$color};
`;

const TypeFields = styled.fieldset`
  display: flex;
  gap: 6px;
  margin: 0 2px;
  padding: 1px 2px 2px;
  border: 1px solid #aaab9f;
  > legend {
    margin-left: 1px;
    padding: 0 2px;
  }
`;

const ListPanel = styled.div`
  position: relative;
  display: grid;
  grid-template-columns: 1fr 17px;
  grid-template-rows: 501px 17px;
  width: 115px;
  border: 1px solid #dcdde0;
  background: #e5e5e5;
`;

const TypeList = styled.ul`
  display: flex;
  flex-direction: column;
  justify-content: flex-end;
  margin: 0;
  padding: 0;
  list-style: none;
  overflow: hidden;
  background: #fff;
`;

const TypeItem = styled.li`
  flex: none;
  height: 17px;
  padding-left: 1px;
  line-height: 18px;
  white-space: nowrap;
  cursor: default;
  color: ${(p) => (p.$active ? "#fff" : "#111")};
  background: ${(p) => (p.$active ? "#00a0ff" : "none")};
`;

const ListVScroll = styled.div`
  display: flex;
  flex-direction: column;
`;

const ListTrack = styled.div`
  height: 51px;
  background: #fafaf7;
`;

const ListThumb = styled.div`
  flex: 1;
  background: #e5e5e5;
`;

const ListHScroll = styled.div`
  display: flex;
  background: #fafaf7;
`;

const ListHThumb = styled.div`
  flex: 1;
  margin: 0 10px 0 2px;
  background: #e5e5e5;
`;

const ListMark = styled.span`
  position: absolute;
  left: -2px;
  right: 17px;
  bottom: 16px;
  height: 18px;
  border: 2px solid #ff262d;
  pointer-events: none;
`;

const ChartPane = styled.div`
  position: relative;
  flex: 1;
  border: 1px solid #dcdde0;
  border-left-color: #8f8f8f;
  background: #fff;
`;

const ChartCard = styled.div`
  width: 416px;
  margin: -2px 0 0 -2px;
  padding: 0 3px 8px 4px;
  border: 2px solid #ff262d;
  background: #0078c2;
`;

const CardFields = styled.fieldset`
  margin: 0;
  padding: 1px;
  border: 1px solid #e2eaf0;
  border-radius: 5px;
  > legend {
    margin-left: 1px;
    padding: 0 2px;
    color: #fff;
  }
`;

const MapSvg = styled.svg`
  width: 100%;
  background: #fff;
`;

const MapTip = styled.g`
  font-family: "Liberation Sans", "Noto Sans CJK SC", sans-serif;
  font-size: 6px;
  fill: #000;
`;

const DialogFooter = styled.div`
  position: relative;
  display: flex;
  justify-content: flex-end;
  align-items: center;
  gap: 3px;
  height: 32px;
  padding: 2px 5px 0 0;
`;

const DialogButton = styled.button`
  width: 44px;
  height: 20px;
  padding: 0;
  border: 1px solid #dcdde0;
  background: #fff;
`;

const OkButton = styled(DialogButton)`
  width: 48px;
  height: 22px;
  border: 2px solid #ff262d;
`;

const Badge = styled.span`
  position: absolute;
  left: ${(p) => p.$x}px;
  top: ${(p) => p.$y}px;
  z-index: 1;
  width: 26px;
  height: 26px;
  border-radius: 50%;
  background: #ff262d;
  color: #fff;
  font-family: "Liberation Sans", sans-serif;
  font-size: 16px;
  font-weight: bold;
  line-height: 26px;
  text-align: center;
`;
